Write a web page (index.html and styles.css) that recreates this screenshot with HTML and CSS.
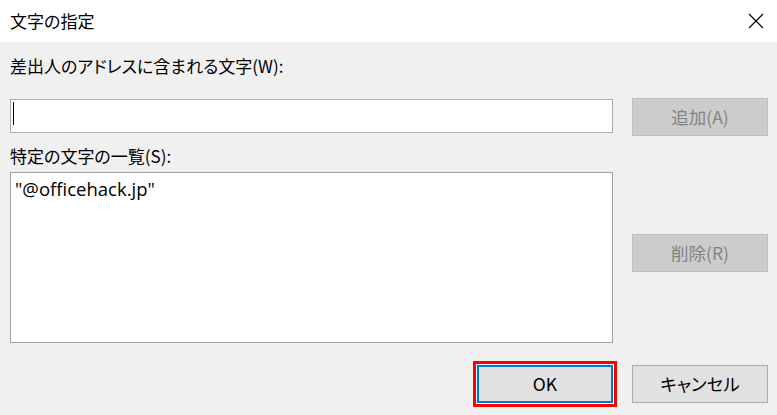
FILE: index.html
```html
<!DOCTYPE html>
<html lang="ja">
<head>
<meta charset="utf-8">
<title>文字の指定</title>
<link rel="stylesheet" href="styles.css">
</head>
<body>
<div class="dialog">
  <div class="titlebar">
    <span class="title">文字の指定</span>
    <svg class="close" width="16" height="16" viewBox="0 0 16 16"><path d="M1 1 L15 15 M15 1 L1 15" stroke="#000" stroke-width="1.1" fill="none"/></svg>
  </div>
  <div class="content">
    <div class="label first">差出人のアドレスに含まれる文字(W):</div>
    <div class="row row-input">
      <div class="input"><span class="caret"></span></div>
      <div class="btn disabled">追加(A)</div>
    </div>
    <div class="label second">特定の文字の一覧(S):</div>
    <div class="row">
      <div class="list">"@officehack.jp"</div>
      <div class="btn disabled del">削除(R)</div>
    </div>
    <div class="footer">
      <div class="btn ok">OK</div>
      <div class="btn">キャンセル</div>
    </div>
  </div>
</div>
</body>
</html>
```
FILE: styles.css
```css
* { box-sizing: border-box; }
html, body { margin: 0; padding: 0; }
body {
  width: 777px;
  height: 415px;
  background: #f0f0f0;
  font-family: "Noto Sans CJK JP", "Noto Sans", sans-serif;
  font-size: 17px;
  color: #000;
  overflow: hidden;
  font-feature-settings: "palt";
}
.titlebar {
  height: 42px;
  background: #fff;
  display: flex;
  align-items: center;
  justify-content: space-between;
  padding: 0 13px 0 10px;
}
.title { line-height: 22px; }
.content { padding: 0 9px 0 10px; }
.label { line-height: 22px; height: 22px; }
.label.first { margin-top: 13px; }
.label.second { margin-top: 9px; }
.row {
  display: flex;
  gap: 19px;
  align-items: flex-start;
}
.row-input { margin-top: 21px; }
.input {
  width: 603px;
  height: 34px;
  margin-top: 1px;
  background: #fff;
  border: 1px solid #a9a9a9;
  padding: 2px 0 0 2px;
}
.caret {
  display: block;
  width: 1px;
  height: 23px;
  background: #000;
}
.list {
  margin-top: 5px;
  width: 603px;
  height: 171px;
  background: #fff;
  border: 1px solid #a0a0a0;
  padding: 5px 5px 5px 4px;
  line-height: 22px;
  font-size: 18.5px;
  font-family: "Open Sans", "Noto Sans", sans-serif;
}
.btn {
  width: 136px;
  height: 38px;
  display: flex;
  align-items: center;
  justify-content: center;
  background: #e1e1e1;
  border: 1px solid #adadad;
  line-height: 22px;
  flex: none;
  font-size: 17.5px;
}
.btn.disabled {
  background: #cccccc;
  border-color: #bfbfbf;
  color: #838383;
}
.btn.del { margin-top: 67px; }
.footer {
  margin-top: 22px;
  display: flex;
  justify-content: flex-end;
  gap: 19px;
}
.btn.ok {
  border: 2px solid #0078d7;
  box-shadow: 0 0 0 1px #fff, 0 0 0 4px #ff0000;
}
```
